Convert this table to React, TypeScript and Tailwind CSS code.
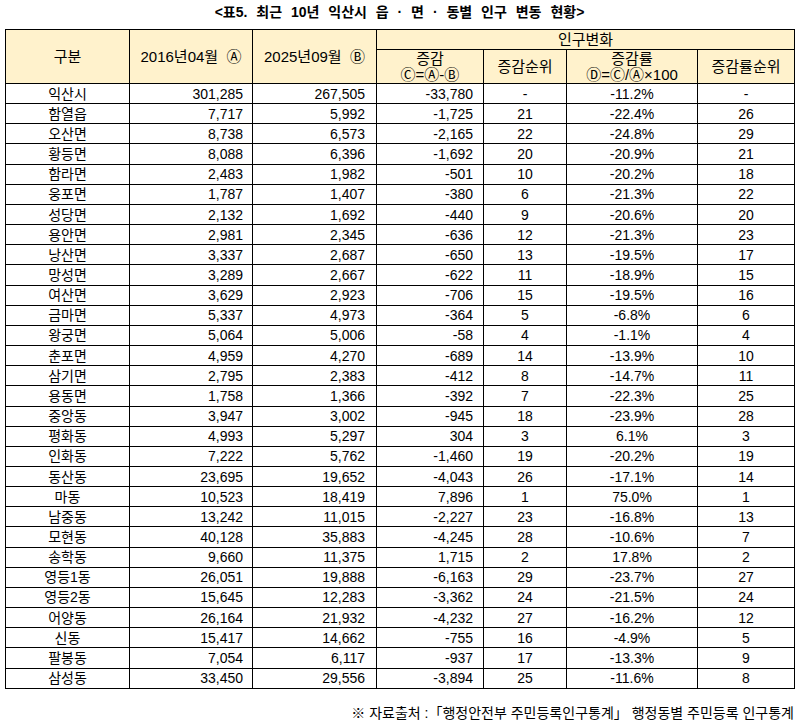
const rows: [string, string, string, string, string, string, string][] = [
  ["익산시", "301,285", "267,505", "-33,780", "-", "-11.2%", "-"],
  ["함열읍", "7,717", "5,992", "-1,725", "21", "-22.4%", "26"],
  ["오산면", "8,738", "6,573", "-2,165", "22", "-24.8%", "29"],
  ["황등면", "8,088", "6,396", "-1,692", "20", "-20.9%", "21"],
  ["함라면", "2,483", "1,982", "-501", "10", "-20.2%", "18"],
  ["웅포면", "1,787", "1,407", "-380", "6", "-21.3%", "22"],
  ["성당면", "2,132", "1,692", "-440", "9", "-20.6%", "20"],
  ["용안면", "2,981", "2,345", "-636", "12", "-21.3%", "23"],
  ["낭산면", "3,337", "2,687", "-650", "13", "-19.5%", "17"],
  ["망성면", "3,289", "2,667", "-622", "11", "-18.9%", "15"],
  ["여산면", "3,629", "2,923", "-706", "15", "-19.5%", "16"],
  ["금마면", "5,337", "4,973", "-364", "5", "-6.8%", "6"],
  ["왕궁면", "5,064", "5,006", "-58", "4", "-1.1%", "4"],
  ["춘포면", "4,959", "4,270", "-689", "14", "-13.9%", "10"],
  ["삼기면", "2,795", "2,383", "-412", "8", "-14.7%", "11"],
  ["용동면", "1,758", "1,366", "-392", "7", "-22.3%", "25"],
  ["중앙동", "3,947", "3,002", "-945", "18", "-23.9%", "28"],
  ["평화동", "4,993", "5,297", "304", "3", "6.1%", "3"],
  ["인화동", "7,222", "5,762", "-1,460", "19", "-20.2%", "19"],
  ["동산동", "23,695", "19,652", "-4,043", "26", "-17.1%", "14"],
  ["마동", "10,523", "18,419", "7,896", "1", "75.0%", "1"],
  ["남중동", "13,242", "11,015", "-2,227", "23", "-16.8%", "13"],
  ["모현동", "40,128", "35,883", "-4,245", "28", "-10.6%", "7"],
  ["송학동", "9,660", "11,375", "1,715", "2", "17.8%", "2"],
  ["영등1동", "26,051", "19,888", "-6,163", "29", "-23.7%", "27"],
  ["영등2동", "15,645", "12,283", "-3,362", "24", "-21.5%", "24"],
  ["어양동", "26,164", "21,932", "-4,232", "27", "-16.2%", "12"],
  ["신동", "15,417", "14,662", "-755", "16", "-4.9%", "5"],
  ["팔봉동", "7,054", "6,117", "-937", "17", "-13.3%", "9"],
  ["삼성동", "33,450", "29,556", "-3,894", "25", "-11.6%", "8"],
];

const cell = "border-r border-b border-black flex items-center";
const head = `${cell} justify-center bg-[#fff2cc] text-center text-[15px]`;

export default function App() {
  return (
    <div
      className="w-[799px] h-[724px] bg-white text-black text-[14px] leading-none"
      style={{ fontFamily: '"Liberation Sans", "Noto Sans CJK KR", sans-serif' }}
    >
      <div className="h-[29px] pt-[5px] text-center font-bold text-[14px] [word-spacing:5px]">
        &lt;표5. 최근 10년 익산시 읍 · 면 · 동별 인구 변동 현황&gt;
      </div>

      <div className="ml-[5px] grid w-fit grid-cols-[124px_123px_124px_107px_83px_131px_97px] grid-rows-[20px_34px_repeat(30,20.17px)] border-l border-t border-black">
        <div className={`${head} row-span-2`}>구분</div>
        <div className={`${head} row-span-2`}>2016년04월&nbsp;&nbsp;Ⓐ</div>
        <div className={`${head} row-span-2`}>2025년09월&nbsp;&nbsp;Ⓑ</div>
        <div className={`${head} col-span-4`}>인구변화</div>
        <div className={`${head} flex-col leading-[16px]`}>
          <span>증감</span>
          <span>Ⓒ=Ⓐ-Ⓑ</span>
        </div>
        <div className={head}>증감순위</div>
        <div className={`${head} flex-col leading-[16px]`}>
          <span>증감률</span>
          <span>Ⓓ=Ⓒ/Ⓐ×100</span>
        </div>
        <div className={head}>증감률순위</div>

        {rows.map((r) => (
          <div key={r[0]} className="contents">
            <div className={`${cell} justify-center`}>{r[0]}</div>
            <div className={`${cell} justify-end pr-[9px]`}>{r[1]}</div>
            <div className={`${cell} justify-end pr-[11px]`}>{r[2]}</div>
            <div className={`${cell} justify-end pr-[10px]`}>{r[3]}</div>
            <div className={`${cell} justify-center`}>{r[4]}</div>
            <div className={`${cell} justify-center`}>{r[5]}</div>
            <div className={`${cell} justify-center`}>{r[6]}</div>
          </div>
        ))}
      </div>

      <div className="mt-[17px] pr-[5px] text-right text-[14px]">
        ※ 자료출처 :「행정안전부 주민등록인구통계」 행정동별 주민등록 인구통계
      </div>
    </div>
  );
}
